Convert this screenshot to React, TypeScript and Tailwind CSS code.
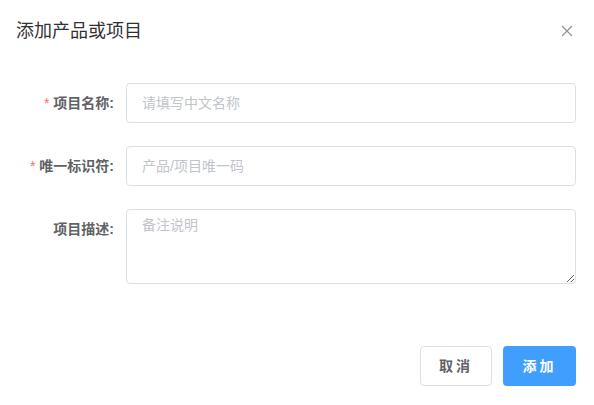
import React from 'react';

const font = { fontFamily: '"Liberation Sans", "Noto Sans CJK SC", sans-serif' };

function FormItem({ label, required, children }: { label: string; required?: boolean; children: React.ReactNode }) {
  return (
    <div className="flex items-start">
      <label className="w-[100px] shrink-0 pr-[12px] text-right text-[14px] leading-[40px] font-bold text-[#606266]">
        {required && <span className="text-[#f56c6c] mr-[4px] font-normal">*</span>}
        {label}
      </label>
      <div className="flex-1">{children}</div>
    </div>
  );
}

export default function App() {
  return (
    <div className="w-[594px] h-[405px] bg-white" style={font}>
      {/* Header */}
      <div className="flex items-center justify-between pl-[16px] pr-[20px] pt-[19px] pb-[10px]">
        <span className="text-[18px] leading-[24px] text-[#303133]">添加产品或项目</span>
        <svg width="12" height="12" viewBox="0 0 12 12" className="mr-[1px]">
          <path d="M1 1 L11 11 M11 1 L1 11" stroke="#909399" strokeWidth="1.2" />
        </svg>
      </div>

      {/* Body */}
      <div className="pl-[26px] pr-[18px] pt-[30px] flex flex-col gap-[23px]">
        <FormItem label="项目名称:" required>
          <input
            placeholder="请填写中文名称"
            className="w-full h-[40px] rounded-[4px] border border-[#dcdfe6] px-[15px] text-[14px] text-[#606266] placeholder:text-[#c0c4cc] outline-none"
            style={font}
          />
        </FormItem>
        <FormItem label="唯一标识符:" required>
          <input
            placeholder="产品/项目唯一码"
            className="w-full h-[40px] rounded-[4px] border border-[#dcdfe6] px-[15px] text-[14px] text-[#606266] placeholder:text-[#c0c4cc] outline-none"
            style={font}
          />
        </FormItem>
        <FormItem label="项目描述:">
          <textarea
            placeholder="备注说明"
            className="block w-full h-[75px] rounded-[4px] border border-[#dcdfe6] px-[15px] py-[5px] text-[14px] leading-[21px] text-[#606266] placeholder:text-[#c0c4cc] outline-none resize-y"
            style={font}
          />
        </FormItem>
      </div>

      {/* Footer */}
      <div className="flex justify-end gap-[11px] pr-[18px] pt-[62px]">
        <button className="w-[72px] h-[40px] rounded-[4px] border border-[#dcdfe6] bg-white text-[14px] font-bold text-[#606266] tracking-[3px]">
          取消
        </button>
        <button className="w-[73px] h-[40px] rounded-[4px] bg-[#409eff] text-[14px] font-bold text-white tracking-[3px]">
          添加
        </button>
      </div>
    </div>
  );
}
